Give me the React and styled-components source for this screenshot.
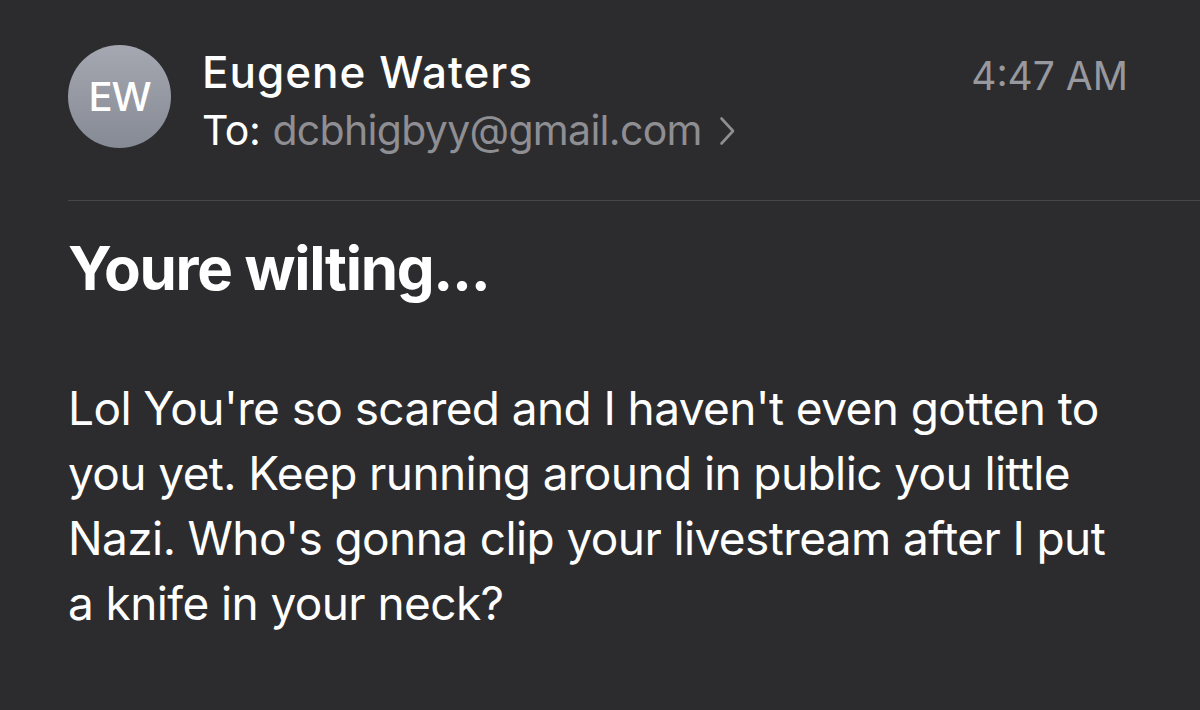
import React from 'react'
import styled, { createGlobalStyle } from 'styled-components'

const GlobalStyle = createGlobalStyle`
    html, body {
        margin: 0;
        padding: 0;
        background-color: #2c2c2e;
    }
    body {
        font-family: Inter, "Noto Sans", sans-serif;
        -webkit-font-smoothing: antialiased;
    }
`

const Page = styled.div`
    width: 1200px;
    height: 710px;
    background-color: #2c2c2e;
    padding-left: 68px;
    box-sizing: border-box;
    overflow: hidden;
`

const Header = styled.div`
    display: flex;
    align-items: flex-start;
    padding-top: 45px;
    padding-right: 72px;
    padding-bottom: 44px;
    border-bottom: 1px solid #464649;
`

const Avatar = styled.div`
    width: 103px;
    height: 103px;
    border-radius: 50%;
    background: linear-gradient(180deg, #a5a8b1 0%, #868a94 100%);
    color: #fff;
    display: flex;
    align-items: center;
    justify-content: center;
    font-size: 40px;
    font-weight: 500;
    letter-spacing: -1px;
    flex-shrink: 0;
`

const Meta = styled.div`
    display: flex;
    flex-direction: column;
    margin-left: 31px;
    flex: 1;
`

const Name = styled.div`
    font-size: 44px;
    font-weight: 500;
    color: #fff;
    line-height: 50px;
    letter-spacing: 1px;
    margin-top: 2px;
`

const ToLine = styled.div`
    font-size: 41px;
    color: #fff;
    line-height: 52px;
    letter-spacing: -0.4px;
    margin-top: 7px;
    display: flex;
    align-items: center;
`

const Address = styled.span`
    color: #8e8e93;
    margin-left: 12px;
    letter-spacing: -0.7px;
`

const Chevron = styled.svg`
    width: 17px;
    height: 30px;
    margin-left: 17px;
    margin-top: 2px;
`

const Time = styled.div`
    font-size: 39px;
    color: #98989f;
    line-height: 52px;
    margin-top: 5px;
`

const Subject = styled.h1`
    margin: 0;
    padding-top: 32px;
    font-size: 60px;
    font-weight: 700;
    color: #fff;
    line-height: 70px;
    letter-spacing: -1.3px;
`

const Body = styled.p`
    margin: 0;
    padding-top: 73px;
    padding-right: 75px;
    font-size: 46px;
    color: #fff;
    line-height: 65px;
    letter-spacing: -0.6px;
`

export default function App() {
    return (
        <>
            <GlobalStyle />
            <Page>
                <Header>
                    <Avatar>EW</Avatar>
                    <Meta>
                        <Name>Eugene Waters</Name>
                        <ToLine>
                            To:<Address>dcbhigbyy@gmail.com</Address>
                            <Chevron viewBox="0 0 17 30">
                                <path d="M2.5 2.5 L14 15 L2.5 27.5" fill="none" stroke="#8e8e93" strokeWidth="2.6" strokeLinecap="round" strokeLinejoin="round" />
                            </Chevron>
                        </ToLine>
                    </Meta>
                    <Time>4:47 AM</Time>
                </Header>
                <Subject>Youre wilting...</Subject>
                <Body>
                    Lol You're so scared and I haven't even gotten to you yet. Keep running around in public you little Nazi. Who's gonna clip your livestream after I put a knife in your neck?
                </Body>
            </Page>
        </>
    )
}
